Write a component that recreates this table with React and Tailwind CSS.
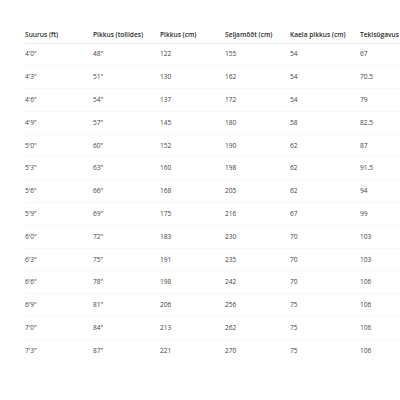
const headers = ['Suurus (ft)', 'Pikkus (tollides)', 'Pikkus (cm)', 'Seljamõõt (cm)', 'Kaela pikkus (cm)', 'Tekisügavus (cm)'];

const rows = [
  ['4\'0"', '48"', '122', '155', '54', '67'],
  ['4\'3"', '51"', '130', '162', '54', '70.5'],
  ['4\'6"', '54"', '137', '172', '54', '79'],
  ['4\'9"', '57"', '145', '180', '58', '82.5'],
  ['5\'0"', '60"', '152', '190', '62', '87'],
  ['5\'3"', '63"', '160', '198', '62', '91.5'],
  ['5\'6"', '66"', '168', '205', '62', '94'],
  ['5\'9"', '69"', '175', '216', '67', '99'],
  ['6\'0"', '72"', '183', '230', '70', '103'],
  ['6\'3"', '75"', '191', '235', '70', '103'],
  ['6\'6"', '78"', '198', '242', '70', '106'],
  ['6\'9"', '81"', '206', '256', '75', '106'],
  ['7\'0"', '84"', '213', '262', '75', '106'],
  ['7\'3"', '87"', '221', '270', '75', '106'],
];

const widths = ['w-[68px]', 'w-[67px]', 'w-[65px]', 'w-[65px]', 'w-[70px]', 'w-[90px]'];

export default function App() {
  return (
    <div className="w-[400px] h-[400px] overflow-hidden bg-white pt-[27px] pl-[25px]" style={{ fontFamily: '"Open Sans", "Noto Sans", sans-serif' }}>
      <table className="border-collapse table-fixed w-[425px]">
        <thead>
          <tr className="border-b border-[#ececec] h-[16px]">
            {headers.map((h, i) => (
              <th key={h} className={`${widths[i]} text-left font-semibold text-[6.6px] text-[#2a2a2a] whitespace-nowrap p-0 align-middle`}>{h}</th>
            ))}
          </tr>
        </thead>
        <tbody>
          {rows.map((r, ri) => (
            <tr key={ri} className={ri < rows.length - 1 ? 'border-b border-[#f7f7f7] h-[22.8px]' : 'h-[22.8px]'}>
              {r.map((c, ci) => (
                <td key={ci} className="text-left text-[6.6px] text-[#444] whitespace-nowrap p-0 align-middle">{c}</td>
              ))}
            </tr>
          ))}
        </tbody>
      </table>
    </div>
  );
}
